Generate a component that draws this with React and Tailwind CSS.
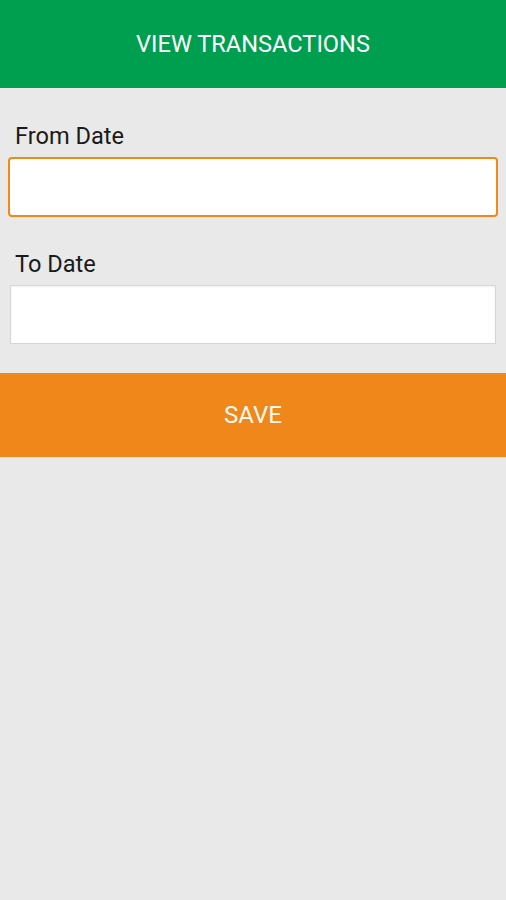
export default function App() {
  return (
    <div className="min-h-[900px] w-full bg-[#e9e9e9]" style={{ fontFamily: 'Roboto, "Liberation Sans", sans-serif' }}>
      <header className="flex h-[88px] items-center justify-center bg-[#009e4f]">
        <h1 className="pt-[2px] text-[23.6px] font-normal text-white">VIEW TRANSACTIONS</h1>
      </header>
      <div className="px-[8px] pt-[34px]">
        <label className="block pl-[7px] text-[23.6px] leading-[28px] text-[#1a1a1a]">From Date</label>
        <div className="mt-[7px] h-[60px] rounded-[4px] border-[2.5px] border-[#ef8a19] bg-white"></div>
        <label className="mt-[33px] block pl-[7px] text-[23.6px] leading-[28px] text-[#1a1a1a]">To Date</label>
        <div className="mx-[2px] mt-[7px] h-[59px] border border-[#d6d6d6] bg-white shadow-[inset_0_1px_3px_rgba(0,0,0,0.06)]"></div>
      </div>
      <button className="mt-[29px] flex h-[84px] w-full items-center justify-center bg-[#ef871a] text-[24px] text-[#fff8ee]">
        SAVE
      </button>
    </div>
  );
}
